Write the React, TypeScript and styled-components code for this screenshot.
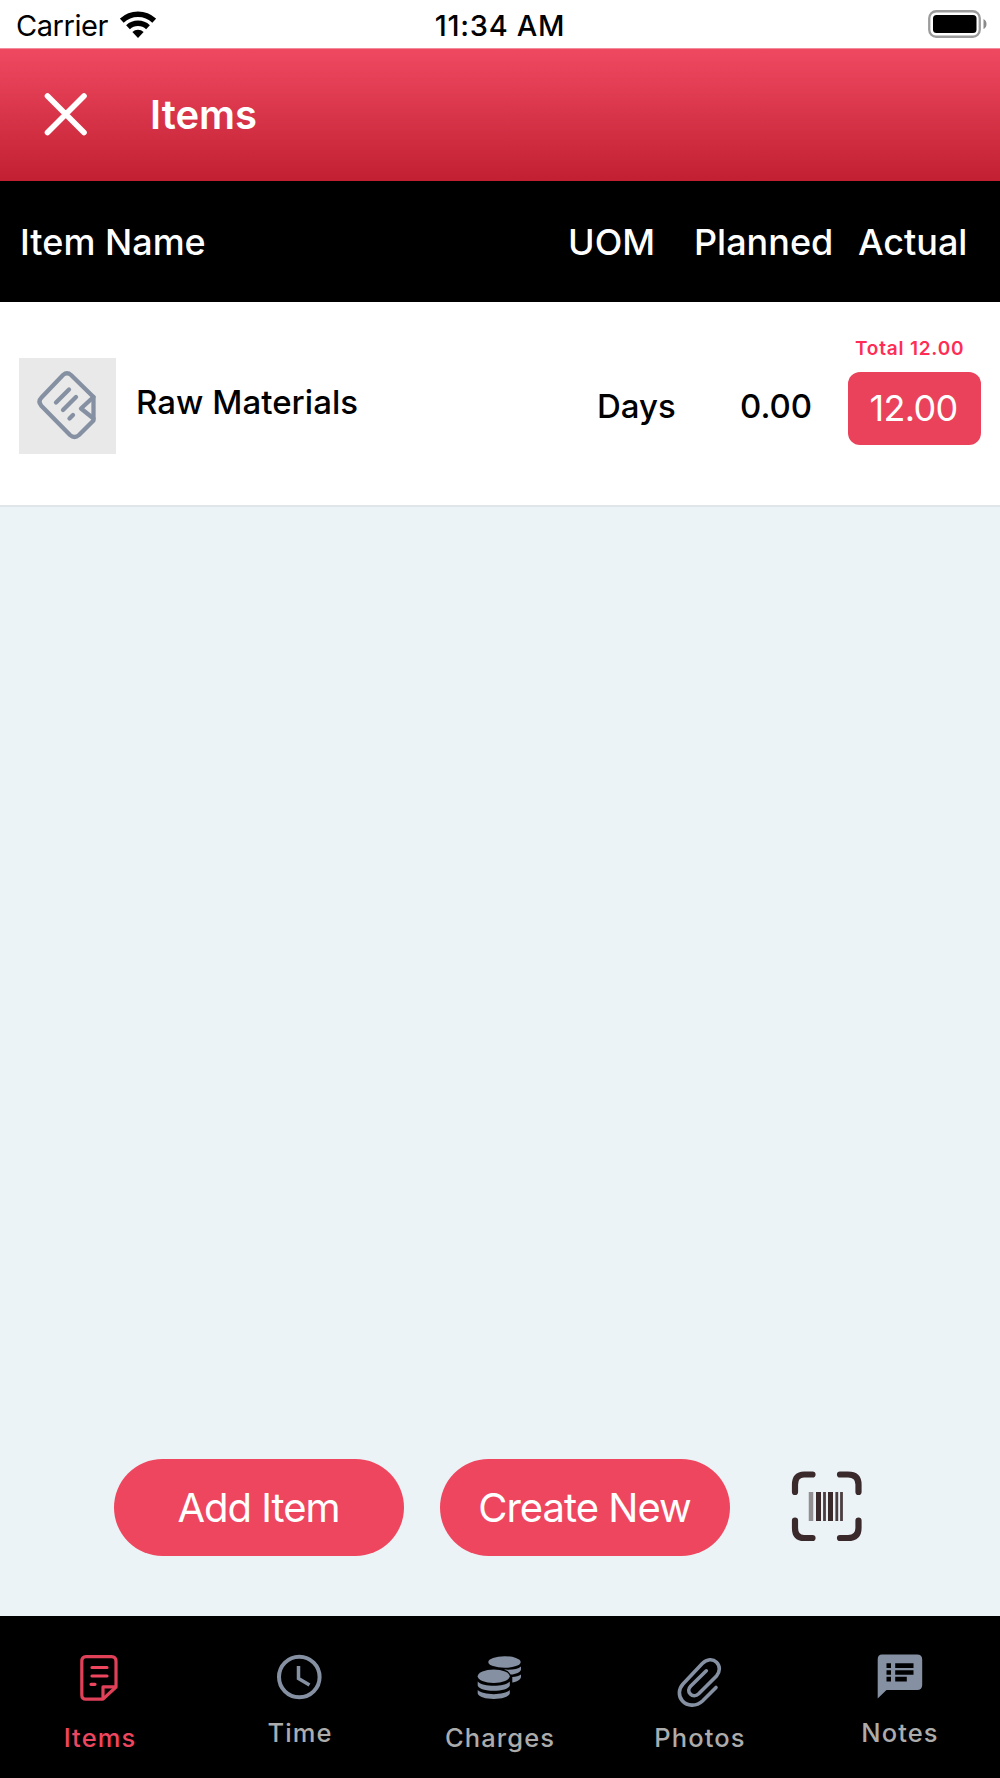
import React from "react";
import styled, { createGlobalStyle } from "styled-components";

const GlobalStyle = createGlobalStyle`
  *, *::before, *::after { box-sizing: border-box; }
  body {
    margin: 0;
    background: #ebf3f7;
    font-family: Inter, "Liberation Sans", sans-serif;
  }
`;

const rose = "#ef465f";
const slate = "#8591a3";

const Screen = styled.div`
  display: flex;
  flex-direction: column;
  width: 1000px;
  height: 1778px;
  background: #ebf3f7;
  overflow: hidden;
`;

const StatusBar = styled.div`
  display: grid;
  grid-template-columns: 1fr auto 1fr;
  align-items: center;
  height: 48px;
  padding: 3px 13px 0 16px;
  background: #fff;
  color: #000;
  font-size: 29px;
  line-height: 45px;
`;

const Network = styled.div`
  display: flex;
  align-items: center;
  gap: 12px;
  letter-spacing: -0.45px;

  svg {
    margin-top: -2px;
  }
`;

const Clock = styled.div`
  padding-right: 3px;
  font-weight: 500;
  letter-spacing: 0.7px;
`;

const BatteryIcon = styled.svg`
  justify-self: end;
  margin-top: -3px;
`;

const Header = styled.header`
  display: flex;
  align-items: center;
  height: 133px;
  padding-left: 43px;
  gap: 63px;
  background: linear-gradient(#ef4961, #c22032);
  border-top: 1px solid #f08c9b;
`;

const CloseButton = styled.button`
  display: flex;
  width: 44px;
  height: 46px;
  padding: 0;
  border: 0;
  background: none;
`;

const Title = styled.h1`
  margin: 0;
  color: #fff;
  font-size: 40px;
  font-weight: 600;
  line-height: 48px;
  letter-spacing: 0;
`;

const ColumnHeads = styled.div`
  display: grid;
  grid-template-columns: 548px 126px 164px 1fr;
  align-items: center;
  height: 121px;
  padding-left: 20px;
  background: #000;
  color: #fff;
  font-size: 36px;
  font-weight: 500;
`;

const ColumnHead = styled.div`
  white-space: nowrap;
`;

const Row = styled.div`
  display: grid;
  grid-template-columns: 117px 461px 143px 108px 133px;
  align-items: center;
  height: 205px;
  padding: 4px 0 0 19px;
  background: #fff;
  border-bottom: 2px solid #e0e5ea;
  color: #000;
  font-size: 33px;
  font-weight: 500;
`;

const Thumb = styled.div`
  display: flex;
  width: 97px;
  height: 96px;
  margin-top: 1px;
  background: #e9e9e9;
`;

const ItemName = styled.div`
  margin-top: -7px;
  letter-spacing: 0.04px;
`;

const Cell = styled.div`
  letter-spacing: 0;
`;

const Actual = styled.div`
  display: flex;
  flex-direction: column;
  gap: 12px;
  margin-top: -28px;
`;

const Total = styled.div`
  padding-left: 7px;
  color: #ff2d55;
  font-size: 19px;
  font-weight: 600;
  line-height: 22px;
  letter-spacing: 0.8px;
`;

const Quantity = styled.div`
  height: 73px;
  padding-right: 2px;
  border-radius: 12px;
  background: #eb425b;
  color: #fff;
  font-size: 36px;
  font-weight: 400;
  line-height: 73px;
  letter-spacing: -0.7px;
  text-align: center;
`;

const Spacer = styled.main`
  flex: 1;
`;

const Actions = styled.div`
  display: flex;
  align-items: center;
  gap: 36px;
  height: 157px;
  padding: 0 0 60px 113.5px;
`;

const PillButton = styled.button`
  width: 290px;
  height: 97px;
  padding: 1px 0 0;
  border: 0;
  border-radius: 49px;
  background: ${rose};
  color: #fff;
  font-family: inherit;
  font-size: 40px;
  font-weight: 400;
  line-height: 96px;
  letter-spacing: -1px;
`;

const ScanButton = styled.button`
  display: flex;
  margin-left: 20.5px;
  padding: 0;
  border: 0;
  background: none;
`;

const TabBar = styled.nav`
  display: grid;
  grid-template-columns: repeat(5, 1fr);
  height: 162px;
  background: #000;
`;

const Tab = styled.div<{ $active?: boolean; $raised?: boolean }>`
  display: flex;
  flex-direction: column;
  align-items: center;
  padding-top: 32px;
  gap: ${(p) => (p.$raised ? 2 : 7)}px;
  color: ${(p) => (p.$active ? rose : "#acacac")};
  font-size: 25.5px;
  font-weight: 500;
  line-height: 30px;
  letter-spacing: 1.1px;
`;

const TabIcon = ({ children }: { children: React.ReactNode }) => (
  <svg width="60" height="68" viewBox="0 0 60 68" fill="none" stroke={slate}>
    {children}
  </svg>
);

const ItemsIcon = () => (
  <g stroke="#e04058" strokeWidth="3.2" strokeLinejoin="round">
    <path d="M16 8.6H41.500Q46 8.6 46 13.5V39L33 51.200H16Q11.800 51.200 11.800 47V13.500Q11.800 8.600 16 8.600Z" />
    <path d="M46 38.800H33V51.200" />
    <path d="M22 19.500H37M22 28H37M21 36.300H25" stroke={rose} strokeLinecap="round" />
  </g>
);

const ClockIcon = () => (
  <g strokeWidth="4">
    <circle cx="29.300" cy="29" r="20.300" />
    <path d="M28.500 18V30.500L39.500 37" strokeWidth="3.500" />
  </g>
);

const CoinsIcon = () => (
  <g fill={slate} stroke="none">
    <ellipse cx="34.500" cy="14" rx="16.200" ry="5.800" />
    <path d="M51 18.500V21.500C50.500 24.500 46 26.200 40.500 26.600Q39 23 34 21.600C42 22.200 48 21 51 18.500Z" />
    <path d="M51 26.500V29C50.500 32 47 33.700 42.300 34.500V29C46 28.800 49 28 51 26.500Z" />
    <ellipse cx="23.700" cy="28.300" rx="16" ry="6.800" />
    <path d="M7.700 33.500C13 39.300 34.500 39.300 39.800 33.500V37.500C38 44.500 9.500 44.500 7.700 37.500Z" />
    <path d="M7.700 42C13 47.500 34.500 47.500 39.800 42V45.500C38 52.700 9.500 52.700 7.700 45.500Z" />
  </g>
);

const ClipIcon = () => (
  <path
    strokeWidth="3.600"
    strokeLinecap="round"
    d="M46 39.500L32.500 53C26 59 17 58 12.500 53C8 48 8.500 41 13 36L32.300 15.500C37 10.800 43 10.800 46.500 14.200C50.500 18 50 24 46.500 28L28.700 45.800C26 48.300 22.500 48.300 20.300 46C18 43.700 18.300 40.500 20.800 38L36.300 22.800"
  />
);

const NotesIcon = () => (
  <g stroke="none">
    <path fill={slate} d="M12 6.600H47Q52.200 6.600 52.200 11.500V37Q52.200 42 47 42H16.500L7.700 50.500V11.500Q7.700 6.600 12 6.600Z" />
    <path fill="#000" d="M16.500 15.300H21V20H16.500ZM16.500 22.200H21V26.800H16.500ZM16.500 28.800H21V33.400H16.500ZM25.200 15.300H43.500V20H25.200ZM25.200 22.200H43.500V26.800H25.200ZM25.200 28.800H36.800V33.400H25.200Z" />
  </g>
);

const tabs = [
  { label: "Items", icon: <ItemsIcon />, active: true, raised: false },
  { label: "Time", icon: <ClockIcon />, active: false, raised: true },
  { label: "Charges", icon: <CoinsIcon />, active: false, raised: false },
  { label: "Photos", icon: <ClipIcon />, active: false, raised: false },
  { label: "Notes", icon: <NotesIcon />, active: false, raised: true },
];

export default function App() {
  return (
    <>
      <GlobalStyle />
      <Screen>
        <StatusBar>
          <Network>
            Carrier
            <svg width="36" height="28" viewBox="0 0 36 28" fill="none" stroke="#000">
              <path d="M1.800 9.700A23.700 23.700 0 0 1 34.200 9.700" strokeWidth="5.500" />
              <path d="M8 16.300A14.700 14.700 0 0 1 28 16.300" strokeWidth="5.500" />
              <path d="M12.400 21A8.200 8.200 0 0 1 23.600 21L18 27Z" fill="#000" stroke="none" />
            </svg>
          </Network>
          <Clock>11:34 AM</Clock>
          <BatteryIcon width="59" height="28" viewBox="0 0 59 28">
            <rect x="1.250" y="1.250" width="50.500" height="25.500" rx="7" fill="none" stroke="#9b9b9b" strokeWidth="2.300" />
            <rect x="5" y="5" width="43.500" height="18" rx="3.500" fill="#000" />
            <path d="M55.500 9Q58.500 10.500 58.500 14T55.500 19Z" fill="#8a8a8a" />
          </BatteryIcon>
        </StatusBar>
        <Header>
          <CloseButton aria-label="Close">
            <svg width="44" height="44" viewBox="0 0 44 44" stroke="#fff" strokeWidth="5.600" strokeLinecap="round">
              <path d="M4.500 4L41 40.500M41 4L4.500 40.500" />
            </svg>
          </CloseButton>
          <Title>Items</Title>
        </Header>
        <ColumnHeads>
          <ColumnHead>Item Name</ColumnHead>
          <ColumnHead>UOM</ColumnHead>
          <ColumnHead>Planned</ColumnHead>
          <ColumnHead>Actual</ColumnHead>
        </ColumnHeads>
        <Row>
          <Thumb>
            <svg width="97" height="96" viewBox="0 0 97 96" fill="none" stroke={slate} strokeWidth="4.300" strokeLinejoin="round" strokeLinecap="round">
              <path d="M44 17Q48 13.500 52 17L74.500 39V62.500L60 77Q55.500 81 51 77L22.500 48Q18.500 43.500 22.500 39.500Z" />
              <path d="M74.500 39L62 50.500L74.500 60.500" />
              <path d="M37 44.500L50 31.500M44 52L57 39M50.500 60.500L54 57" />
            </svg>
          </Thumb>
          <ItemName>Raw Materials</ItemName>
          <Cell>Days</Cell>
          <Cell>0.00</Cell>
          <Actual>
            <Total>Total 12.00</Total>
            <Quantity>12.00</Quantity>
          </Actual>
        </Row>
        <Spacer />
        <Actions>
          <PillButton>Add Item</PillButton>
          <PillButton>Create New</PillButton>
          <ScanButton aria-label="Scan barcode">
            <svg width="82" height="82" viewBox="0 0 82 82" fill="none" stroke="#3b2a2b">
              <path strokeWidth="6.200" strokeLinecap="round" d="M9 25V17.500Q9 7.500 18 7.500H26.500M54 7.500H62Q72.500 7.500 72.500 17.500V25M72.500 53.500V61Q72.500 71 62 71H54M26.500 71H18Q9 71 9 61V53.500" />
              <path d="M25 25V54" strokeWidth="4.500" opacity=".5" />
              <path d="M32.500 25V54M44.500 25V54" strokeWidth="5" />
              <path d="M38.500 25V54M50.800 25V54M55.500 25V54" strokeWidth="2.800" opacity=".9" />
            </svg>
          </ScanButton>
        </Actions>
        <TabBar>
          {tabs.map((t) => (
            <Tab key={t.label} $active={t.active} $raised={t.raised}>
              <TabIcon>{t.icon}</TabIcon>
              {t.label}
            </Tab>
          ))}
        </TabBar>
      </Screen>
    </>
  );
}
